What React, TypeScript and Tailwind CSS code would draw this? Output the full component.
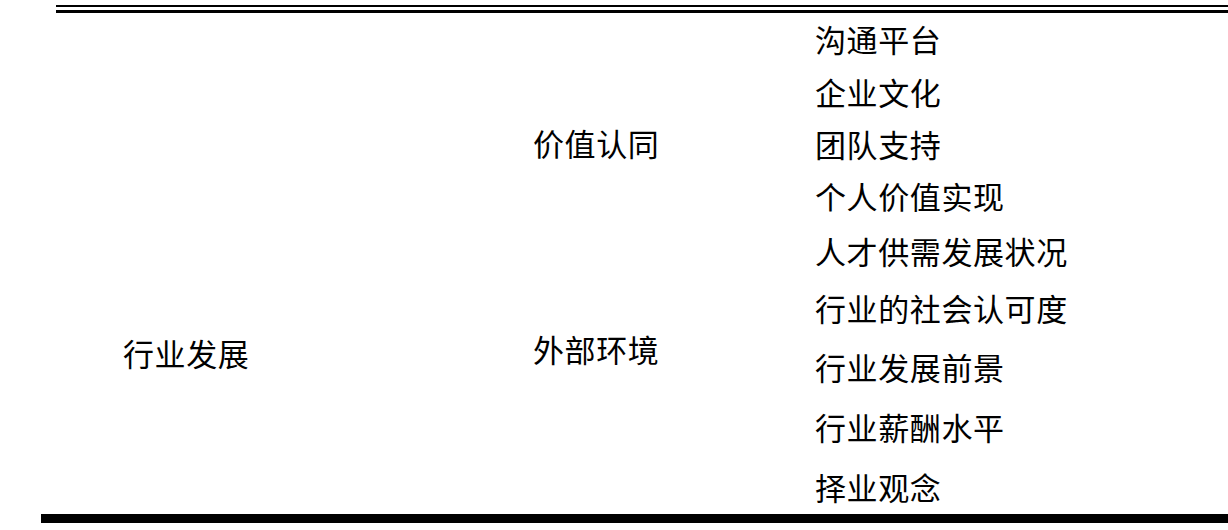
export default function App() {
  const items = [
    "沟通平台",
    "企业文化",
    "团队支持",
    "个人价值实现",
    "人才供需发展状况",
    "行业的社会认可度",
    "行业发展前景",
    "行业薪酬水平",
    "择业观念",
  ];
  const rowStarts = [
    "row-start-1",
    "row-start-2",
    "row-start-3",
    "row-start-4",
    "row-start-5",
    "row-start-6",
    "row-start-7",
    "row-start-8",
    "row-start-9",
  ];

  return (
    <div
      className="w-[1228px] h-[530px] bg-white text-black pl-[41px]"
      style={{ fontFamily: '"Noto Sans CJK SC", "Noto Sans", sans-serif' }}
    >
      {/* double rule on top */}
      <div className="ml-[15px] pt-[5px]">
        <div className="h-[2px] bg-black" />
        <div className="h-[3px] mt-[3px] bg-black" />
      </div>

      <div className="mt-[1px] grid grid-cols-[492px_282px_1fr] grid-rows-[54px_52px_52px_53px_56px_58px_60px_60px_55px] text-[31px] leading-[31px] tracking-[0.6px]">
        <div className="col-start-1 row-start-1 row-span-9 pl-[82px] pt-[323px]">
          行业发展
        </div>
        <div className="col-start-2 row-start-3 flex items-center pb-[8px]">价值认同</div>
        <div className="col-start-2 row-start-5 row-span-5 pt-[108px]">外部环境</div>
        {items.map((t, i) => (
          <div
            key={t}
            className={`col-start-3 ${rowStarts[i]} flex items-center ${i === 8 ? "" : "pb-[6px]"}`}
          >
            {t}
          </div>
        ))}
      </div>

      {/* heavy bottom rule */}
      <div className="h-[9px] bg-black" />
    </div>
  );
}
